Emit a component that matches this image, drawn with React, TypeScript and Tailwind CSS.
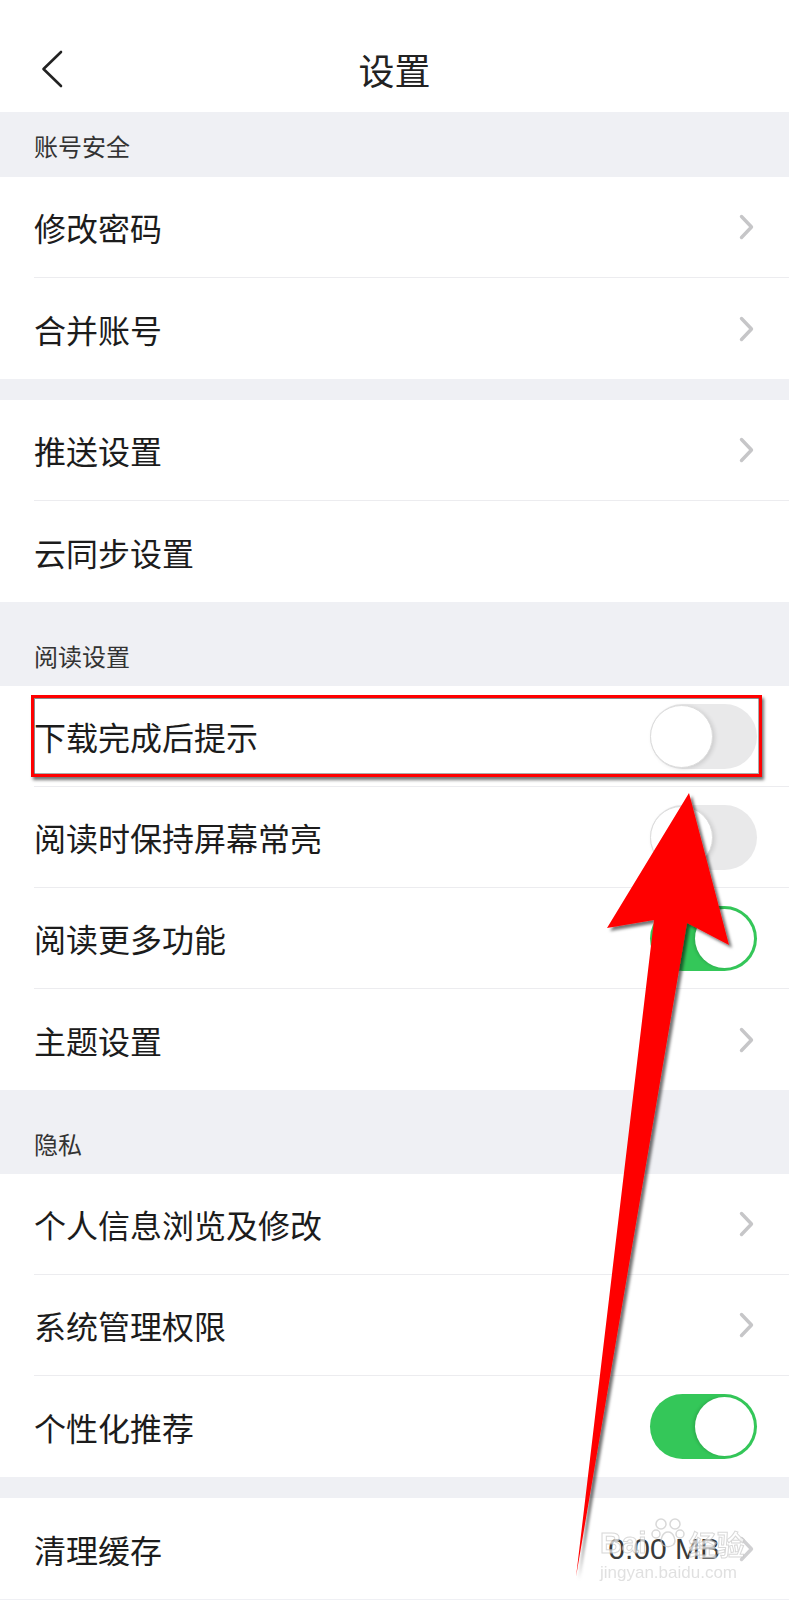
import React from 'react';

type RightKind = 'chevron' | 'none' | 'off' | 'on' | 'value';

interface RowProps {
  label: string;
  right?: RightKind;
  value?: string;
  divider?: boolean;
}

const Chevron = ({ color = '#c6c6c8' }: { color?: string }) => (
  <svg width="15" height="26" viewBox="0 0 15 26" fill="none">
    <path
      d="M2.5 2.5L12.5 13L2.5 23.5"
      stroke={color}
      strokeWidth="3.4"
      strokeLinecap="round"
      strokeLinejoin="round"
    />
  </svg>
);

const Toggle = ({ on }: { on: boolean }) =>
  on ? (
    <div className="flex h-[65px] w-[107px] items-center justify-end rounded-full bg-[#34c759] p-[3px]">
      <div className="h-[59px] w-[59px] rounded-full bg-white shadow-[-2px_0_3px_rgba(0,0,0,0.12)]" />
    </div>
  ) : (
    <div className="flex h-[65px] w-[107px] items-center justify-start rounded-full bg-[#e9e9ea]">
      <div className="h-[63px] w-[63px] rounded-full border border-[#dcdcdc] bg-white shadow-[2px_1px_4px_rgba(0,0,0,0.12)]" />
    </div>
  );

const Row = ({ label, right = 'chevron', value, divider = true }: RowProps) => (
  <div className="bg-white pl-[34px]">
    <div
      className={
        'flex h-[101px] items-center justify-between ' +
        (divider ? 'border-b border-[#ececef] ' : '') +
        (right === 'off' || right === 'on' ? 'pr-[32px]' : 'pr-[35px]')
      }
    >
      <span className="text-[32px] leading-none text-[#1c1c1c]">{label}</span>
      {right === 'chevron' && <Chevron />}
      {(right === 'off' || right === 'on') && <Toggle on={right === 'on'} />}
      {right === 'value' && (
        <div className="flex items-center gap-[19px]">
          <span className="font-['Liberation_Sans',sans-serif] text-[30px] leading-none text-[#3a3a3a]">
            {value}
          </span>
          <Chevron color="#d0d0d2" />
        </div>
      )}
    </div>
  </div>
);

const SectionHeader = ({ title, first = false }: { title: string; first?: boolean }) => (
  <div
    className={
      'flex items-center bg-[#eff0f4] pl-[34px] ' +
      (first ? 'h-[65px] pt-[3px]' : 'mt-[20px] h-[64px] pt-[3px]')
    }
  >
    <span className="text-[24px] leading-none text-[#333333]">{title}</span>
  </div>
);

const Gap = () => <div className="h-[21px] bg-[#eff0f4]" />;

export default function App() {
  return (
    <div className="relative h-[1600px] w-[789px] overflow-hidden bg-[#eff0f4] font-['Noto_Sans_CJK_SC','Noto_Sans',sans-serif]">
      {/* nav bar */}
      <div className="grid h-[112px] grid-cols-[1fr_auto_1fr] items-center bg-white px-[40px] pt-[25px]">
        <svg width="24" height="40" viewBox="0 0 24 40" fill="none">
          <path
            d="M21 3L3.5 20L21 37"
            stroke="#222"
            strokeWidth="2.6"
            strokeLinecap="round"
            strokeLinejoin="round"
          />
        </svg>
        <span className="text-[36px] leading-none text-[#222]">设置</span>
        <span />
      </div>

      <SectionHeader title="账号安全" first />
      <Row label="修改密码" />
      <Row label="合并账号" divider={false} />
      <Gap />
      <Row label="推送设置" />
      <Row label="云同步设置" right="none" divider={false} />

      <SectionHeader title="阅读设置" />
      <Row label="下载完成后提示" right="off" />
      <Row label="阅读时保持屏幕常亮" right="off" />
      <Row label="阅读更多功能" right="on" />
      <Row label="主题设置" divider={false} />

      <SectionHeader title="隐私" />
      <Row label="个人信息浏览及修改" />
      <Row label="系统管理权限" />
      <Row label="个性化推荐" right="on" divider={false} />
      <Gap />
      <Row label="清理缓存" right="value" value="0.00 MB" divider={false} />

      {/* annotation: red box */}
      <div className="pointer-events-none absolute left-[31px] top-[695px] h-[82px] w-[731px] border-[3px] border-[#ff0000] shadow-[2px_3px_3px_rgba(0,0,0,0.55),inset_1px_1px_0_rgba(90,90,90,0.7),inset_-1px_-1px_0_rgba(90,90,90,0.5)]" />

      {/* annotation: big red arrow */}
      <svg
        className="pointer-events-none absolute left-0 top-0"
        width="789"
        height="1600"
        viewBox="0 0 789 1600"
      >
        <defs>
          <filter id="arrowShadow" x="-20%" y="-5%" width="140%" height="110%">
            <feDropShadow dx="3" dy="3" stdDeviation="1.5" floodColor="#000" floodOpacity="0.55" />
          </filter>
        </defs>
        <polygon
          points="689,793 729,945 687,923 576,1577 654,920 607,928"
          fill="#ff0000"
          filter="url(#arrowShadow)"
        />
      </svg>

      {/* watermark */}
      <div className="pointer-events-none absolute left-[600px] top-[1516px] flex flex-col items-start opacity-70">
        <div className="flex items-end gap-[4px] font-['Liberation_Sans',sans-serif] text-[30px] font-bold leading-none text-white [-webkit-text-stroke:1px_#c8c8c8]">
          <span>Bai</span>
          <svg width="34" height="34" viewBox="0 0 34 34" fill="none" className="mb-[8px]">
            <circle cx="10" cy="8" r="5" stroke="#c8c8c8" strokeWidth="1.5" />
            <circle cx="24" cy="8" r="5" stroke="#c8c8c8" strokeWidth="1.5" />
            <circle cx="5" cy="18" r="4" stroke="#c8c8c8" strokeWidth="1.5" />
            <circle cx="29" cy="18" r="4" stroke="#c8c8c8" strokeWidth="1.5" />
            <path d="M17 16C11 16 8 26 12 29C15 31 19 31 22 29C26 26 23 16 17 16Z" stroke="#c8c8c8" strokeWidth="1.5" />
          </svg>
          <span className="font-['Noto_Sans_CJK_SC',sans-serif] text-[28px]">经验</span>
        </div>
        <span className="mt-[6px] font-['Liberation_Sans',sans-serif] text-[17px] leading-none text-[#d4d4d4]">
          jingyan.baidu.com
        </span>
      </div>
    </div>
  );
}
